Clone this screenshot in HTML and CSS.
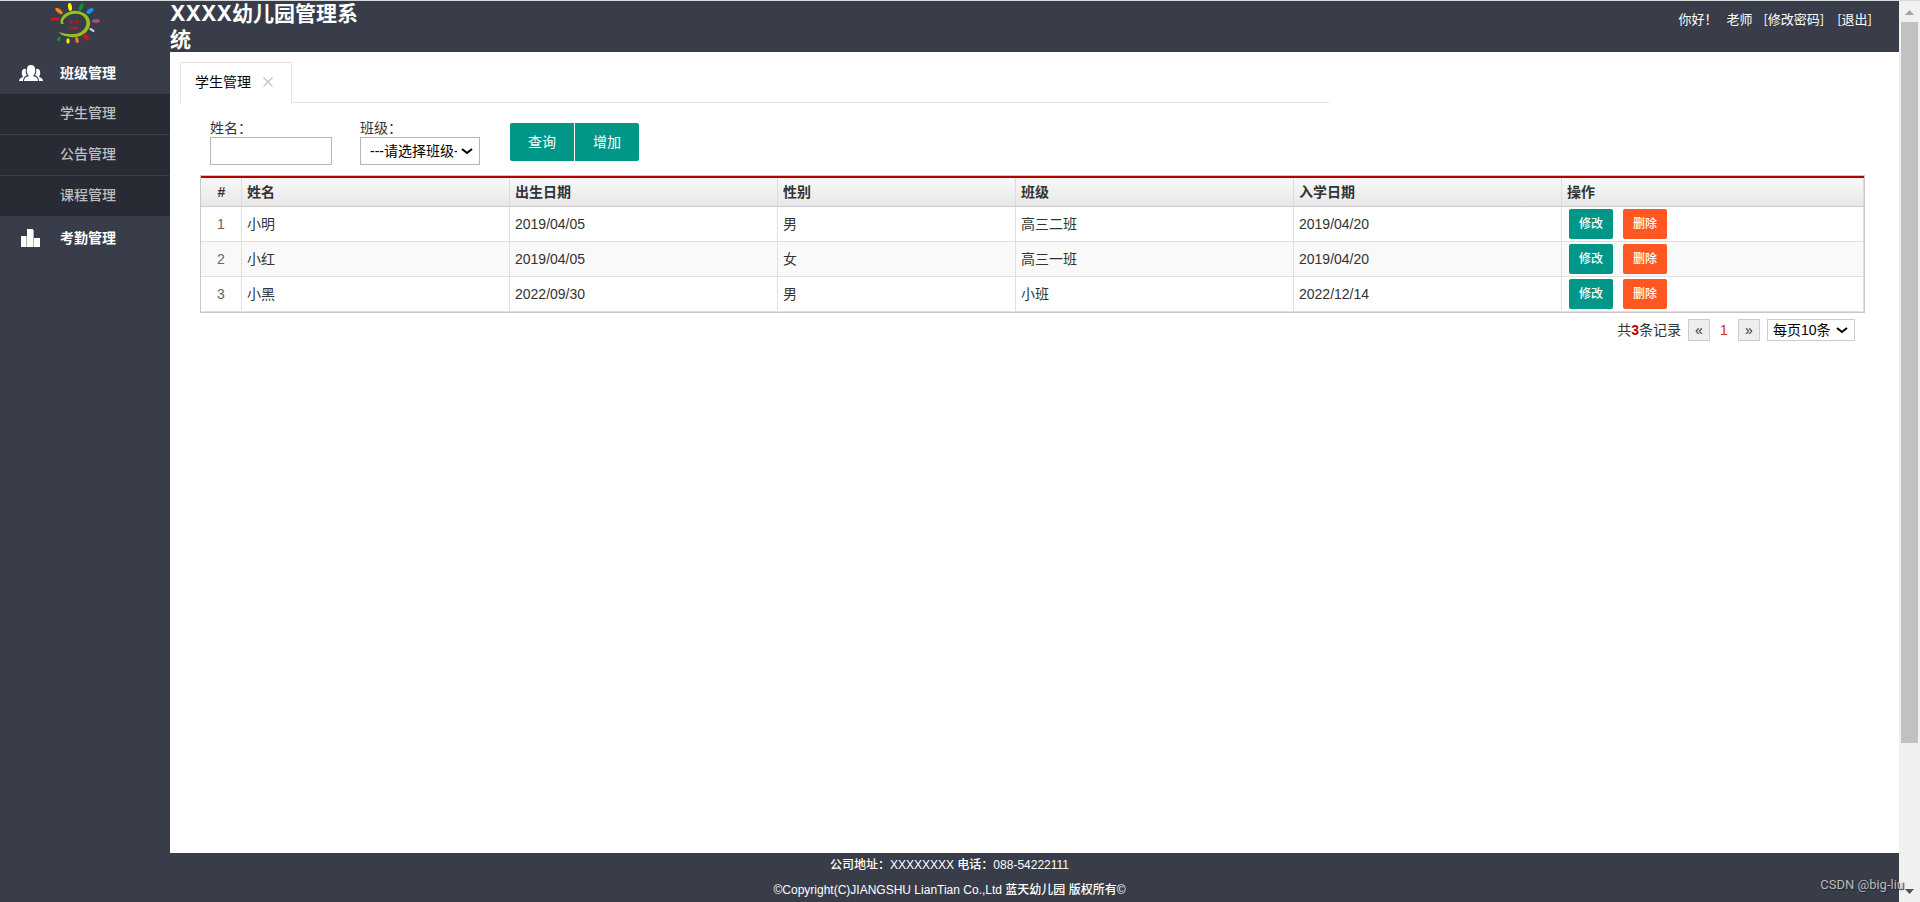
FILE: index.html
```html
<!DOCTYPE html>
<html lang="zh-CN">
<head>
<meta charset="utf-8">
<title>XXXX幼儿园管理系统</title>
<link rel="stylesheet" href="styles.css">
</head>
<body>
<div class="window">
  <div class="page">
    <header class="header">
      <div class="logo">
        <svg width="52" height="44" viewBox="0 0 52 44" aria-hidden="true">
          <path d="M11 23C9 14 20 9 27 10C36 11 41 17 40 24C38 33 29 37 20 36C14 35 11 34 9 31C18 34 26 34 31 31C37 27 38 20 34 16C30 11 19 12 15 17C12 20 13 22 14 23Z" fill="#95c11f"/>
          <circle cx="21" cy="21" r="1.800" fill="#c1121f"/>
          <circle cx="27" cy="21" r="1.800" fill="#c1121f"/>
          <path d="M17 25Q23 28 29 25Q27 29 23 28Q19 28 17 25Z" fill="#d2141e"/>
          <ellipse cx="20" cy="6" rx="2" ry="4" fill="#ffed00" transform="rotate(-8 20 6)"/>
          <ellipse cx="31" cy="6" rx="2" ry="4" fill="#16912f" transform="rotate(25 31 6)"/>
          <ellipse cx="40" cy="10" rx="2" ry="4" fill="#1296f3" transform="rotate(55 40 10)"/>
          <ellipse cx="46" cy="20" rx="4" ry="2" fill="#a34c83"/>
          <ellipse cx="42" cy="29" rx="3" ry="1.200" fill="#d9cdf0" transform="rotate(30 42 29)"/>
          <ellipse cx="36" cy="36" rx="2" ry="4" fill="#d2141e" transform="rotate(-35 36 36)"/>
          <ellipse cx="27" cy="39" rx="1.600" ry="3" fill="#f08619" transform="rotate(-15 27 39)"/>
          <ellipse cx="18" cy="40" rx="1.600" ry="2.800" fill="#ffed00"/>
          <ellipse cx="9" cy="38" rx="1.600" ry="2.400" fill="#16912f" transform="rotate(30 9 38)"/>
          <ellipse cx="5" cy="18" rx="5" ry="1.600" fill="#d2141e"/>
          <ellipse cx="9" cy="10" rx="2" ry="4.400" fill="#f08619" transform="rotate(-50 9 10)"/>
        </svg>
      </div>
      <h1 class="title">XXXX幼儿园管理系统</h1>
      <div class="user">
        <span>你好！</span>
        <span>老师</span>
        <a href="#password">[修改密码]</a>
        <a href="#logout">[退出]</a>
      </div>
    </header>
    <div class="body">
      <nav class="sidebar">
        <a class="group" href="#class">
          <svg width="24" height="16" viewBox="0 0 24 16" fill="#fff" aria-hidden="true">
            <path d="M5 16Q5 12 10 11Q7 8 8 4Q8 0 12 0Q16 0 16 4Q17 8 14 11Q19 12 19 16Z"/>
            <path d="M0 16Q0 13 4 12Q2 9 3 6Q4 3 7 4Q6 8 8 10Q4 12 4 16Z"/>
            <path d="M24 16Q24 13 20 12Q22 9 21 6Q20 3 17 4Q18 8 16 10Q20 12 20 16Z"/>
          </svg>
          班级管理
        </a>
        <a class="item" href="#students">学生管理</a>
        <a class="item" href="#notices">公告管理</a>
        <a class="item" href="#courses">课程管理</a>
        <a class="group" href="#attendance">
          <svg width="24" height="18" viewBox="0 0 24 18" aria-hidden="true">
            <path d="M2 7h6v11H2zM8 0h6v18H8zM15 9h6v9h-6z" fill="#fff"/>
            <path d="M7 7h1v11H7zM14 1h1v17h-1z" fill="#aeb0b5"/>
          </svg>
          考勤管理
        </a>
      </nav>
      <main class="main">
        <div class="tabs">
          <div class="tab">学生管理
            <button class="close" type="button" aria-label="关闭">
              <svg width="10" height="10" viewBox="0 0 10 10" aria-hidden="true"><path d="M0.500 0.500L9.500 9.500M9.500 0.500L0.500 9.500" stroke="#c2c2c2" stroke-width="1.200"/></svg>
            </button>
          </div>
        </div>
        <div class="content">
          <form class="search">
            <div class="field name"><label for="name">姓名：</label><input id="name" type="text"></div>
            <div class="field class"><label for="class">班级：</label><select id="class"><option>---请选择班级---</option></select></div>
            <div class="actions"><button type="button">查询</button><button type="button">增加</button></div>
          </form>
          <table class="grid">
            <colgroup><col class="c-no"><col class="c-date"><col class="c-date"><col class="c-sex"><col class="c-class"><col class="c-date"><col></colgroup>
            <thead><tr><th>#</th><th>姓名</th><th>出生日期</th><th>性别</th><th>班级</th><th>入学日期</th><th>操作</th></tr></thead>
            <tbody>
              <tr><td>1</td><td>小明</td><td>2019/04/05</td><td>男</td><td>高三二班</td><td>2019/04/20</td><td><div class="ops"><button class="edit" type="button">修改</button><button class="delete" type="button">删除</button></div></td></tr>
              <tr><td>2</td><td>小红</td><td>2019/04/05</td><td>女</td><td>高三一班</td><td>2019/04/20</td><td><div class="ops"><button class="edit" type="button">修改</button><button class="delete" type="button">删除</button></div></td></tr>
              <tr><td>3</td><td>小黑</td><td>2022/09/30</td><td>男</td><td>小班</td><td>2022/12/14</td><td><div class="ops"><button class="edit" type="button">修改</button><button class="delete" type="button">删除</button></div></td></tr>
            </tbody>
          </table>
          <div class="pager">
            <span>共<b>3</b>条记录</span>
            <a class="step" href="#prev">«</a>
            <span class="current">1</span>
            <a class="step" href="#next">»</a>
            <select aria-label="每页条数"><option>每页10条</option></select>
          </div>
        </div>
      </main>
    </div>
    <footer class="footer">
      <p>公司地址：XXXXXXXX 电话：088-54222111</p>
      <p>©Copyright(C)JIANGSHU LianTian Co.,Ltd 蓝天幼儿园 版权所有©</p>
    </footer>
  </div>
  <div class="scrollbar">
    <svg class="arrow" width="17" height="21" viewBox="0 0 17 21" aria-hidden="true"><path d="M4 14L8.500 9L13 14Z" fill="#a3a3a3"/></svg>
    <div class="thumb"></div>
    <svg class="arrow down" width="17" height="21" viewBox="0 0 17 21" aria-hidden="true"><path d="M4 8L8.500 13L13 8Z" fill="#505050"/></svg>
  </div>
  <div class="watermark">CSDN @big-liu</div>
</div>
</body>
</html>
```
FILE: styles.css
```css
* { box-sizing: border-box; }
body {
  margin: 0;
  font: 14px/20px "Liberation Sans", "Noto Sans CJK SC", sans-serif;
  color: #333;
  background: #fff;
}
a { color: inherit; text-decoration: none; }
button, input, select { font: inherit; }
button { border: 0; color: #fff; cursor: pointer; }
select {
  appearance: none;
  border-radius: 0;
  color: #000;
  background: #fff url("data:image/svg+xml,%3Csvg xmlns='http://www.w3.org/2000/svg' width='12' height='8'%3E%3Cpath d='M1 2l5 4 5-4' fill='none' stroke='%23000' stroke-width='2'/%3E%3C/svg%3E") no-repeat right 6px center;
}

.window {
  position: relative;
  display: flex;
  height: 100vh;
  border-top: 1px solid #d5dbdb;
}
.page { flex: 1; display: flex; flex-direction: column; min-width: 0; }

.header { display: flex; height: 51px; background: #393d49; color: #fff; }
.logo { width: 170px; padding-left: 50px; }
.title {
  width: 200px;
  margin: 0;
  font: bold 21px/26px Inter, "Noto Sans CJK SC", sans-serif;
}
.user {
  display: flex;
  gap: 9px;
  margin-left: auto;
  padding: 8px 25px 0 0;
  font-family: "Noto Sans CJK SC", sans-serif;
  font-size: 13px;
}
.user a { padding: 0 2px; }

.body { flex: 1; display: flex; min-height: 0; }
.sidebar { width: 170px; background: #393d49; }
.group {
  display: flex;
  align-items: center;
  gap: 17px;
  height: 42px;
  padding-left: 19px;
  color: #fff;
  font-weight: bold;
}
.item {
  display: block;
  height: 41px;
  padding: 9px 0 0 60px;
  background: #282b33;
  color: #bdbebf;
  font-weight: 500;
  border-bottom: 1px solid #393d49;
}

.main { flex: 1; padding: 10px; min-width: 0; }
.tabs { display: flex; width: calc(67% + 4px); }
.tabs::after { content: ""; flex: 1; border-bottom: 1px solid #e2e2e2; }
.tab {
  display: flex;
  align-items: center;
  gap: 12px;
  height: 41px;
  padding: 0 18px 2px 14px;
  border: 1px solid #e2e2e2;
  border-bottom: 0;
  border-radius: 2px 2px 0 0;
  color: #000;
}
.close { display: flex; padding: 0; background: none; }

.content { padding: 17px 24px 0 20px; }
.search { display: flex; padding-left: 10px; }
.field { display: flex; flex-direction: column; line-height: 17px; }
.name { width: 122px; margin-right: 28px; }
.class { width: 120px; margin-right: 30px; }
.field input, .field select { width: 100%; height: 28px; border: 1px solid #b5b5b5; border-radius: 0; }
.field input { background: #fff; }
.field select { padding: 0 22px 0 9px; }
.actions { display: flex; gap: 1px; padding-top: 3px; }
.actions button { width: 64px; height: 38px; padding: 0; background: #009688; }
.actions button:first-child { border-radius: 2px 0 0 2px; }
.actions button:last-child { border-radius: 0 2px 2px 0; }

.grid {
  width: 100%;
  margin-top: 10px;
  table-layout: fixed;
  border-collapse: separate;
  border-spacing: 0;
  border: 1px solid #c8c8c8;
}
.c-no { width: 41px; }
.c-date { width: 268px; }
.c-sex { width: 238px; }
.c-class { width: 278px; }
.grid th, .grid td { padding: 0 5px; text-align: left; }
.grid th {
  height: 31px;
  padding-top: 2px;
  border-bottom: 1px solid #ccc;
  background:
    linear-gradient(#b80000, #b80000) 0 0 / 100% 2px no-repeat,
    linear-gradient(#dcdcdc, #dcdcdc) 100% 0 / 1px 100% no-repeat,
    linear-gradient(#f9f9f9, #e8e8e8);
}
.grid td { height: 35px; border-right: 1px solid #e0e0e0; border-bottom: 1px solid #e0e0e0; }
.grid th:first-child, .grid td:first-child { text-align: center; }
.grid td:first-child { color: #666; }
.grid tbody tr:nth-child(even) { background: #f9f9f9; }
.ops { display: flex; gap: 10px; padding-left: 2px; }
.ops button { width: 44px; height: 30px; padding: 0; border-radius: 2px; font-size: 12px; font-weight: 500; }
.edit { background: #009688; }
.delete { background: #ff5722; }

.pager { display: flex; justify-content: flex-end; gap: 7px; padding: 6px 10px 0 0; line-height: 22px; }
.pager b { color: #b80000; }
.step { width: 22px; height: 22px; border: 1px solid #ccc; background: #eee; line-height: 20px; text-align: center; }
.current { width: 14px; text-align: center; color: #c30; }
.pager select { width: 88px; height: 22px; padding: 0 20px 0 5px; border: 1px solid #ccc; line-height: 20px; }

.footer { height: 49px; background: #393d49; color: #fff; text-align: center; font-size: 12px; font-weight: 500; }
.footer p { margin: 0; line-height: 25px; }

.scrollbar { display: flex; flex-direction: column; width: 21px; padding: 0 2px; background: #f0f0f0; }
.arrow { flex: none; }
.thumb { height: 80%; background: #c1c1c1; }
.down { margin-top: auto; }

.watermark {
  position: absolute;
  right: 16px;
  bottom: 7px;
  color: #b9bbc0;
  font-family: Roboto, sans-serif;
  font-size: 13px;
  text-shadow: 1px 1px 1px #222;
}
```
